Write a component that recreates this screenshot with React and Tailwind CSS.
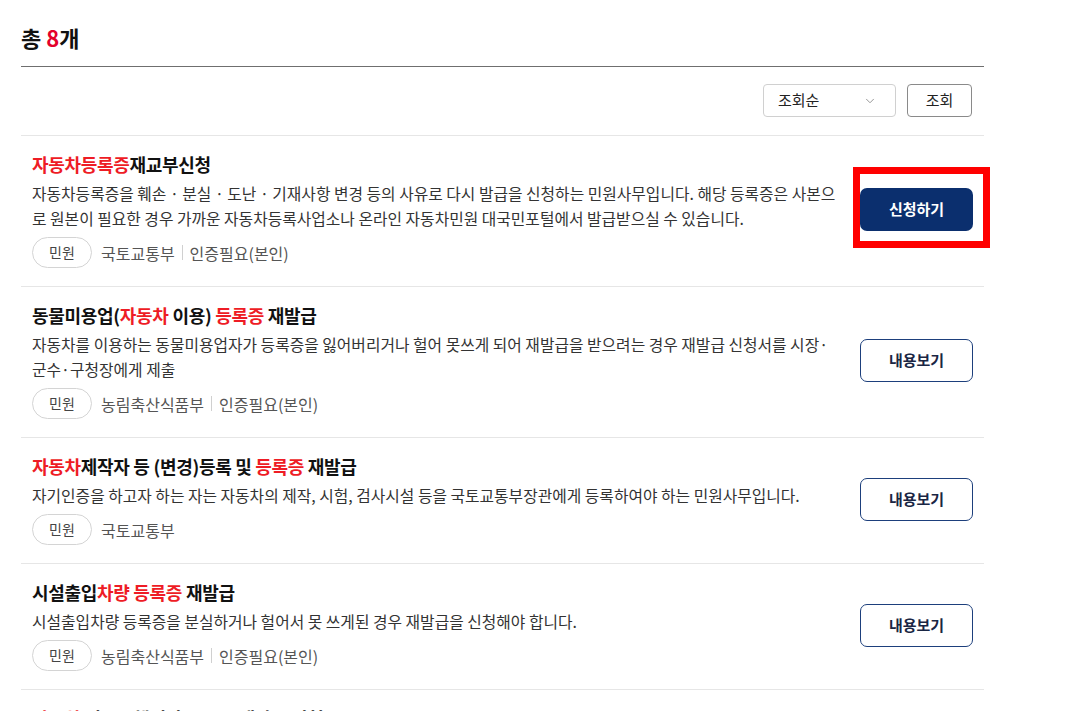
import React from "react";
import { ChevronDown } from "lucide-react";

const R = ({ children }) => <span className="text-[#ee1c25]">{children}</span>;

const items = [
  {
    title: (
      <>
        <R>자동차등록증</R>재교부신청
      </>
    ),
    desc:
      "자동차등록증을 훼손 · 분실 · 도난 · 기재사항 변경 등의 사유로 다시 발급을 신청하는 민원사무입니다. 해당 등록증은 사본으로 원본이 필요한 경우 가까운 자동차등록사업소나 온라인 자동차민원 대국민포털에서 발급받으실 수 있습니다.",
    org: "국토교통부",
    auth: "인증필요(본인)",
    primary: true,
  },
  {
    title: (
      <>
        동물미용업(<R>자동차</R> 이용) <R>등록증</R> 재발급
      </>
    ),
    desc: (
      <>
        자동차를 이용하는 동물미용업자가 등록증을 잃어버리거나 헐어 못쓰게 되어 재발급을 받으려는 경우 재발급 신청서를 시장·{" "}
        <span className="whitespace-nowrap">군수·구청장에게</span> 제출
      </>
    ),
    org: "농림축산식품부",
    auth: "인증필요(본인)",
  },
  {
    title: (
      <>
        <R>자동차</R>제작자 등 (변경)등록 및 <R>등록증</R> 재발급
      </>
    ),
    desc:
      "자기인증을 하고자 하는 자는 자동차의 제작, 시험, 검사시설 등을 국토교통부장관에게 등록하여야 하는 민원사무입니다.",
    org: "국토교통부",
  },
  {
    title: (
      <>
        시설출입<R>차량 등록증</R> 재발급
      </>
    ),
    desc: "시설출입차량 등록증을 분실하거나 헐어서 못 쓰게된 경우 재발급을 신청해야 합니다.",
    org: "농림축산식품부",
    auth: "인증필요(본인)",
  },
  {
    title: (
      <>
        <R>자동차</R> 임시운행허가 <R>등록증</R> 재발급 신청
      </>
    ),
    desc: "임시운행허가증을 분실하거나 헐어서 못 쓰게된 경우 재발급을 신청합니다.",
    org: "국토교통부",
  },
];

function Item({ it }) {
  return (
    <div className="flex items-center gap-[13px] border-b border-[#e6e6e6] px-[11px] pt-[15px] pb-[18px]">
      <div className="flex-1 min-w-0">
        <div className="text-[18px] leading-[26px] font-bold text-[#111] tracking-[-0.3px]">{it.title}</div>
        <p className="mt-[4px] text-[15.8px] leading-[25px] text-[#333] break-all">{it.desc}</p>
        <div className="mt-[6px] flex items-center text-[16px] text-[#555]">
          <span className="flex h-[31px] w-[60px] items-center justify-center rounded-full border border-[#d4d4d4] text-[14px] text-[#444]">
            민원
          </span>
          <span className="ml-[9px]">{it.org}</span>
          {it.auth && (
            <>
              <span className="mx-[7px] h-[15px] w-px bg-[#d0d0d0]" />
              <span>{it.auth}</span>
            </>
          )}
        </div>
      </div>
      {it.primary ? (
        <div className="relative">
          <button className="flex h-[43px] w-[113px] items-center justify-center rounded-[7px] bg-[#0b2f6e] text-[15px] font-bold text-white">
            신청하기
          </button>
          <div className="pointer-events-none absolute left-[-7px] top-[-21px] h-[81px] w-[137px] border-[7px] border-[#ff0000]" />
        </div>
      ) : (
        <button className="flex h-[43px] w-[113px] items-center justify-center rounded-[7px] border border-[#1d3f7c] bg-white text-[15px] font-bold text-[#1a2644]">
          내용보기
        </button>
      )}
    </div>
  );
}

export default function App() {
  return (
    <div
      className="min-h-[711px] w-[1082px] bg-white"
      style={{ fontFamily: '"Noto Sans CJK KR", "Noto Sans", sans-serif' }}
    >
      <div className="ml-[21px] w-[963px]">
        <h2 className="border-b border-[#6f6f6f] pt-[22px] pb-[14px] text-[22px] leading-[30px] font-bold text-[#111]">
          총 <span className="text-[#e4002b]">8</span>개
        </h2>
        <div className="flex justify-end gap-[11px] border-b border-[#e6e6e6] pt-[17px] pb-[18px] pr-[12px]">
          <div className="flex h-[33px] w-[133px] items-center justify-between rounded-[4px] border border-[#d0d0d0] pl-[14px] pr-[18px] text-[15px] text-[#222]">
            <span>조회순</span>
            <ChevronDown size={14} strokeWidth={1.5} className="text-[#888]" />
          </div>
          <button className="flex h-[33px] w-[65px] items-center justify-center rounded-[4px] border border-[#8a8a8a] text-[15px] text-[#222]">
            조회
          </button>
        </div>
        {items.map((it, i) => (
          <Item key={i} it={it} />
        ))}
      </div>
    </div>
  );
}
